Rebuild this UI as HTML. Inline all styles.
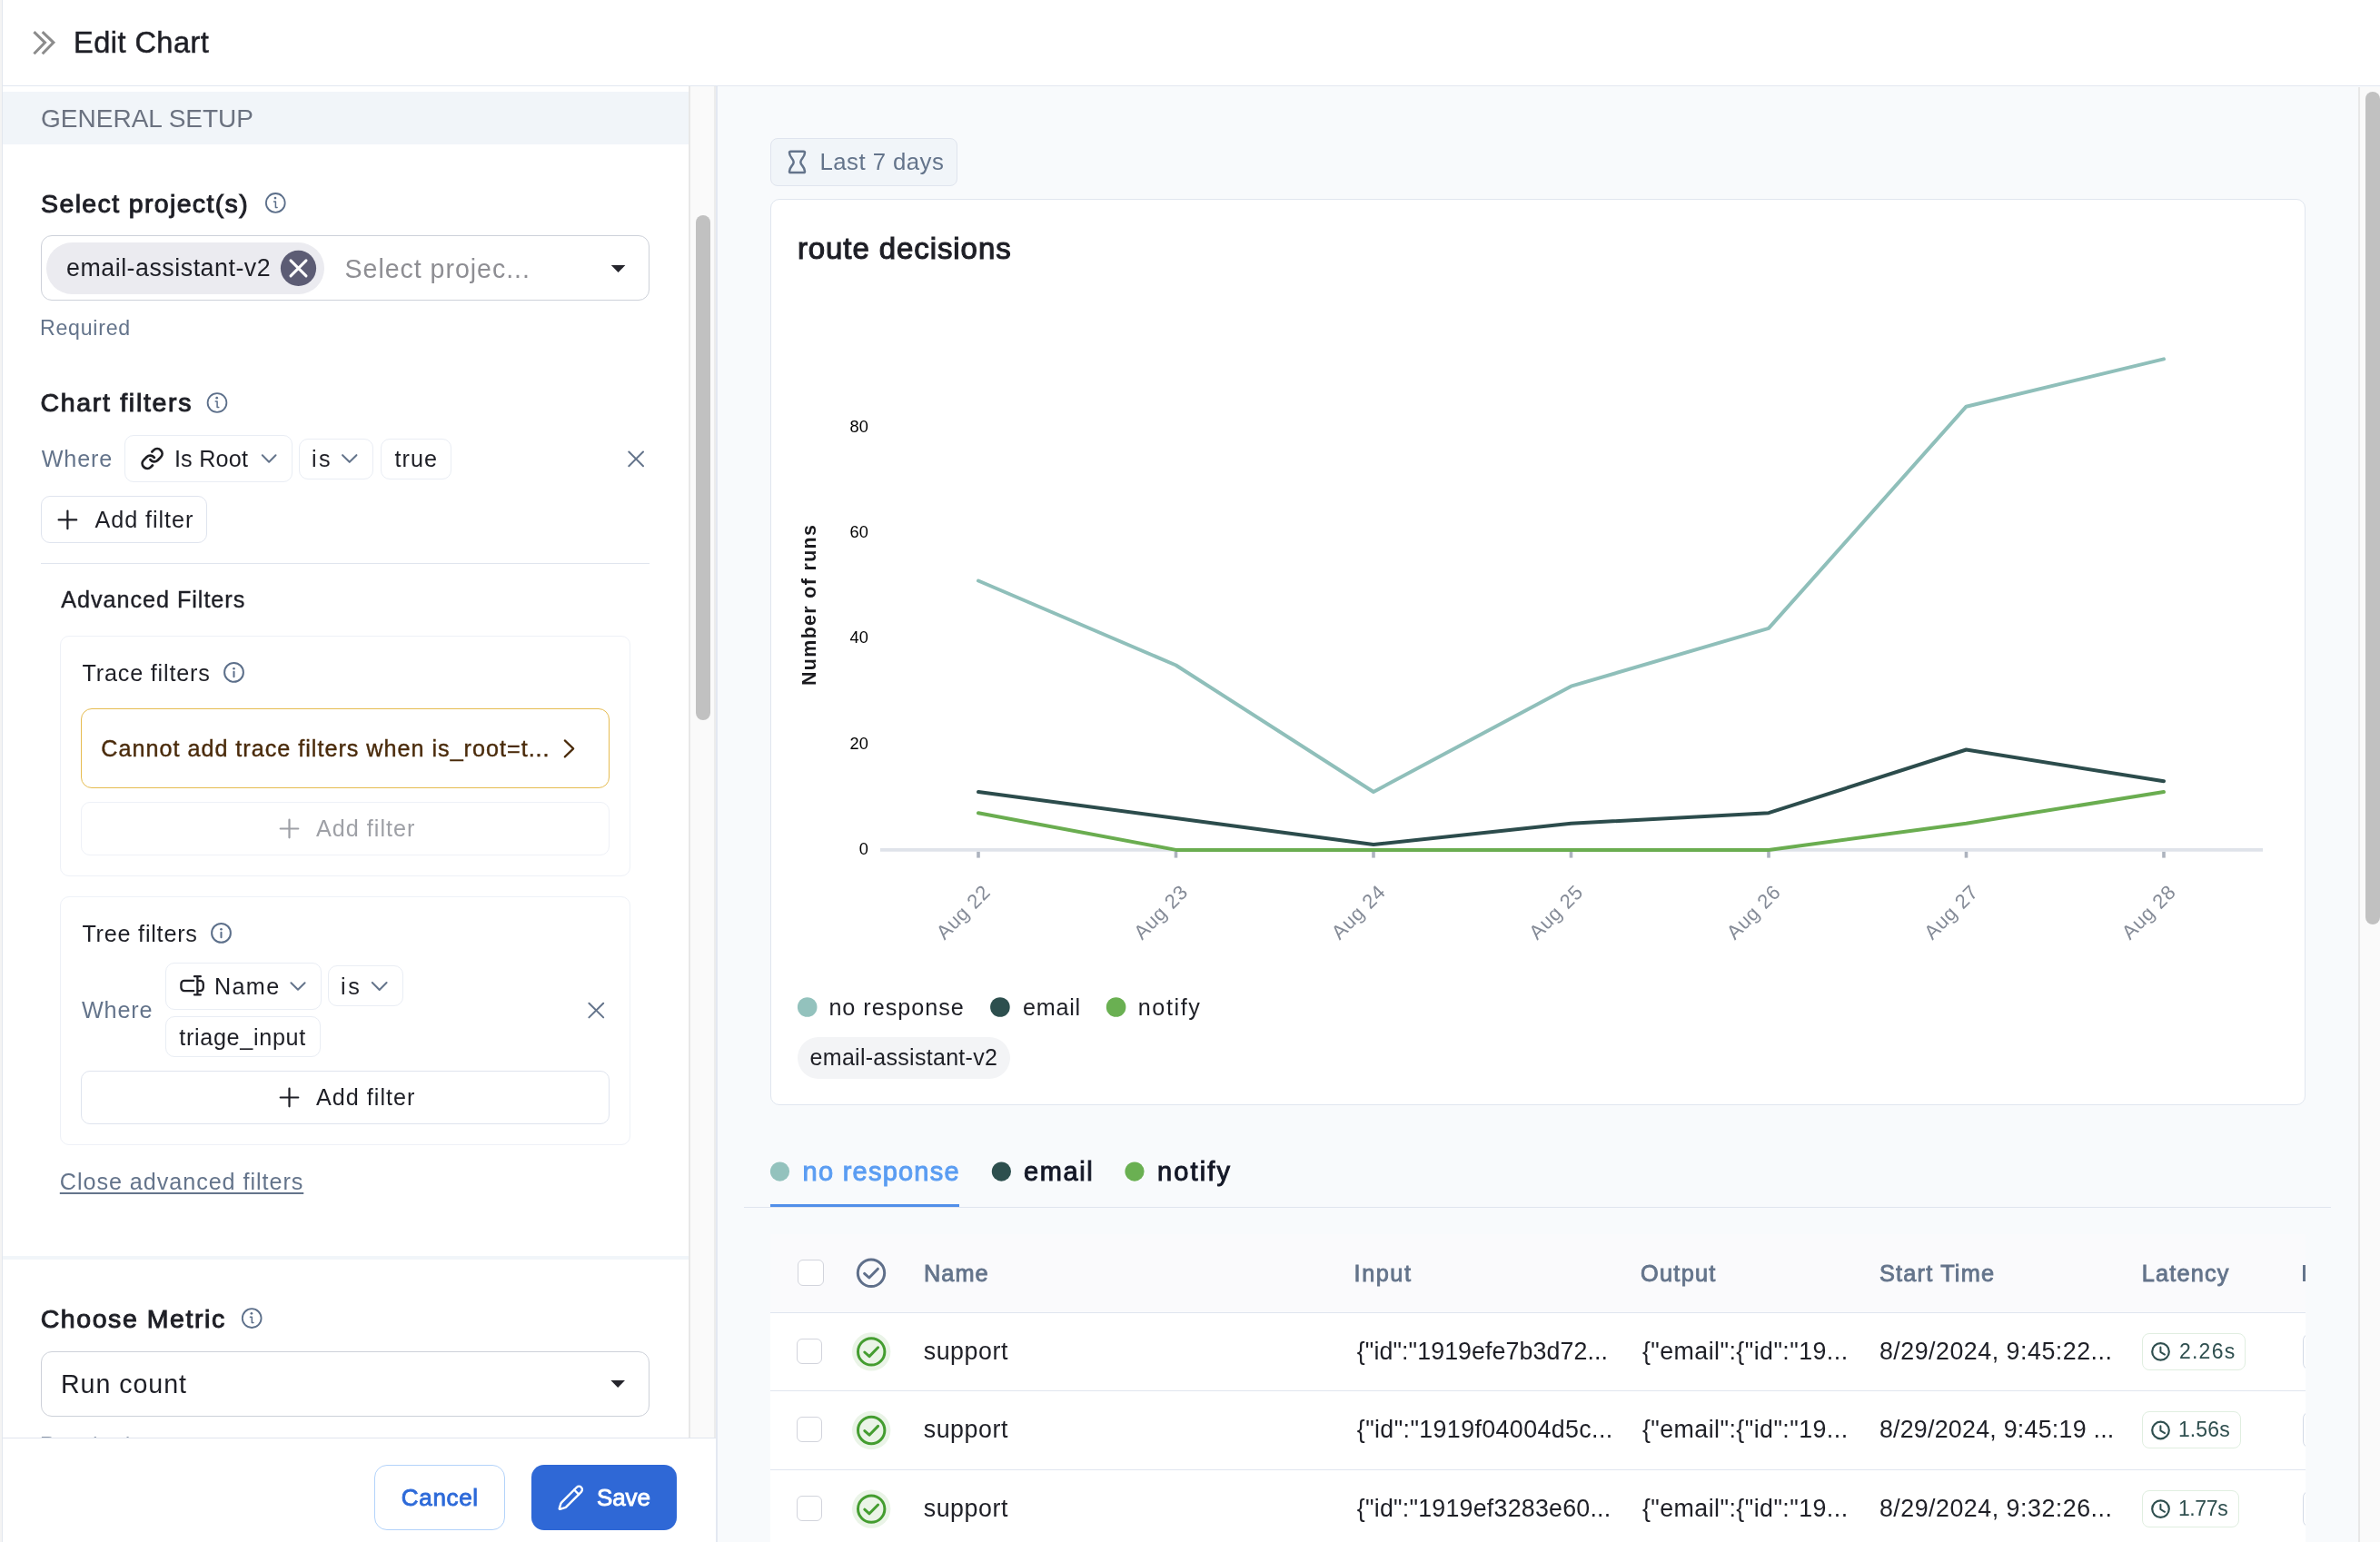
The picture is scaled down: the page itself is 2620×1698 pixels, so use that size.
<!DOCTYPE html>
<html lang="en">
<head>
<meta charset="utf-8">
<title>Edit Chart</title>
<style>
html,body{margin:0;padding:0;}
body{width:2620px;height:1698px;overflow:hidden;position:relative;background:#f8fafc;font-family:'Liberation Sans', sans-serif;}
.b{position:absolute;box-sizing:border-box;}
.t{position:absolute;white-space:pre;line-height:1;font-family:'Liberation Sans', sans-serif;}
svg.ov{position:absolute;left:0;top:0;will-change:transform;}
.tl{position:absolute;left:0;top:0;width:2620px;height:1698px;will-change:transform;}
.u{text-decoration:underline;text-decoration-thickness:2px;text-underline-offset:3px;}

</style>
</head>
<body>
<div class="b" style="left:0px;top:0px;width:2620px;height:94px;background:#fff;"></div>
<div class="b" style="left:3px;top:94px;width:2617px;height:1px;background:#e2e7f0;"></div>
<div class="b" style="left:0px;top:0px;width:2px;height:1698px;background:#f4f4f4;"></div>
<div class="b" style="left:2px;top:0px;width:1px;height:1698px;background:#e2e7ee;"></div>
<div class="b" style="left:3px;top:95px;width:755px;height:1488px;background:#fff;"></div>
<div class="b" style="left:3px;top:101px;width:755px;height:58px;background:#f1f5f9;"></div>
<div class="b" style="left:3px;top:1383px;width:755px;height:4px;background:#f1f5f9;"></div>
<div class="b" style="left:758px;top:95px;width:2px;height:1488px;background:#e8e8e8;"></div>
<div class="b" style="left:760px;top:95px;width:26px;height:1488px;background:#fafafa;"></div>
<div class="b" style="left:766px;top:237px;width:16px;height:556px;background:#c1c1c1;border-radius:8px;"></div>
<div class="b" style="left:786px;top:95px;width:2px;height:1488px;background:#ececec;"></div>
<div class="b" style="left:788px;top:95px;width:2px;height:1603px;background:#e3e8f1;"></div>
<div class="b" style="left:3px;top:1583px;width:785px;height:115px;background:#fff;"></div>
<div class="b" style="left:3px;top:1583px;width:785px;height:1px;background:#e0e5ee;"></div>
<div class="b" style="left:2596px;top:96px;width:2px;height:1602px;background:#e8e8e8;"></div>
<div class="b" style="left:2598px;top:96px;width:22px;height:1602px;background:#fafafa;"></div>
<div class="b" style="left:2604px;top:101px;width:16px;height:917px;background:#c1c1c1;border-radius:8px;"></div>
<div class="b" style="left:45px;top:259px;width:670px;height:72px;background:#fff;border:1px solid #cdd1d9;border-radius:12px;"></div>
<div class="b" style="left:51px;top:267px;width:306px;height:57px;background:#ebebf0;border-radius:29px;"></div>
<div class="b" style="left:137px;top:479px;width:185px;height:52px;background:#fff;border:1px solid #e9edf4;border-radius:10px;"></div>
<div class="b" style="left:329px;top:483px;width:82px;height:45px;background:#fff;border:1px solid #e9edf4;border-radius:10px;"></div>
<div class="b" style="left:419px;top:483px;width:78px;height:45px;background:#fff;border:1px solid #e9edf4;border-radius:10px;"></div>
<div class="b" style="left:45px;top:546px;width:183px;height:52px;background:#fff;border:1px solid #dfe4ee;border-radius:10px;"></div>
<div class="b" style="left:45px;top:620px;width:670px;height:1px;background:#e0e5ee;"></div>
<div class="b" style="left:66px;top:700px;width:628px;height:265px;background:#fff;border:1px solid #eef1f7;border-radius:10px;"></div>
<div class="b" style="left:89px;top:780px;width:582px;height:88px;background:#fff;border:1px solid #e6bc50;border-radius:12px;"></div>
<div class="b" style="left:89px;top:883px;width:582px;height:59px;background:#fff;border:1px solid #eef1f7;border-radius:10px;"></div>
<div class="b" style="left:66px;top:987px;width:628px;height:274px;background:#fff;border:1px solid #eef1f7;border-radius:10px;"></div>
<div class="b" style="left:182px;top:1060px;width:172px;height:52px;background:#fff;border:1px solid #e9edf4;border-radius:10px;"></div>
<div class="b" style="left:361px;top:1063px;width:83px;height:45px;background:#fff;border:1px solid #e9edf4;border-radius:10px;"></div>
<div class="b" style="left:182px;top:1119px;width:171px;height:45px;background:#fff;border:1px solid #e9edf4;border-radius:10px;"></div>
<div class="b" style="left:89px;top:1179px;width:582px;height:59px;background:#fff;border:1px solid #dfe4ee;border-radius:10px;"></div>
<div class="b" style="left:45px;top:1488px;width:670px;height:72px;background:#fff;border:1px solid #cdd1d9;border-radius:12px;"></div>
<div class="b" style="left:412px;top:1613px;width:144px;height:72px;background:#fff;border:1px solid #b3d3fa;border-radius:14px;"></div>
<div class="b" style="left:585px;top:1613px;width:160px;height:72px;background:#2f68d6;border-radius:14px;"></div>
<div class="b" style="left:848px;top:152px;width:206px;height:53px;background:#f1f5f9;border:1px solid #dfe4ee;border-radius:8px;"></div>
<div class="b" style="left:848px;top:219px;width:1690px;height:998px;background:#fff;border:1px solid #e0e6ef;border-radius:10px;"></div>
<div class="b" style="left:878px;top:1142px;width:234px;height:46px;background:#f3f4f6;border-radius:23px;"></div>
<div class="b" style="left:819px;top:1329px;width:1747px;height:1px;background:#e0e5ee;"></div>
<div class="b" style="left:848px;top:1326px;width:208px;height:3px;background:#518fe9;"></div>
<div class="b" style="left:848px;top:1359px;width:1690px;height:86px;background:#fafafc;"></div>
<div class="b" style="left:848px;top:1445px;width:1690px;height:253px;background:#fff;"></div>
<div class="b" style="left:848px;top:1445px;width:1690px;height:1px;background:#e0e5ef;"></div>
<div class="b" style="left:848px;top:1531px;width:1690px;height:1px;background:#e0e5ef;"></div>
<div class="b" style="left:848px;top:1618px;width:1690px;height:1px;background:#e0e5ef;"></div>
<div class="b" style="left:878px;top:1387px;width:29px;height:29px;background:#fff;border:1px solid #d2d4dc;border-radius:6px;"></div>
<div class="b" style="left:2535px;top:1393px;width:3px;height:18px;background:#64748b;"></div>
<div class="b" style="left:877px;top:1474px;width:28px;height:28px;background:#fff;border:1px solid #d2d4dc;border-radius:6px;"></div>
<div class="b" style="left:2358px;top:1468px;width:114px;height:41px;background:#fff;border:1px solid #e0eee0;border-radius:8px;"></div>
<div class="b" style="left:2535px;top:1468px;width:25px;height:41px;background:#fff;border:1px solid #d3dae6;border-radius:8px;clip-path:inset(0 22px 0 0);"></div>
<div class="b" style="left:877px;top:1560px;width:28px;height:28px;background:#fff;border:1px solid #d2d4dc;border-radius:6px;"></div>
<div class="b" style="left:2358px;top:1554px;width:109px;height:41px;background:#fff;border:1px solid #e0eee0;border-radius:8px;"></div>
<div class="b" style="left:2535px;top:1554px;width:25px;height:41px;background:#fff;border:1px solid #d3dae6;border-radius:8px;clip-path:inset(0 22px 0 0);"></div>
<div class="b" style="left:877px;top:1647px;width:28px;height:28px;background:#fff;border:1px solid #d2d4dc;border-radius:6px;"></div>
<div class="b" style="left:2358px;top:1641px;width:107px;height:41px;background:#fff;border:1px solid #e0eee0;border-radius:8px;"></div>
<div class="b" style="left:2535px;top:1641px;width:25px;height:41px;background:#fff;border:1px solid #d3dae6;border-radius:8px;clip-path:inset(0 22px 0 0);"></div>
<svg class="ov" width="2620" height="1698" viewBox="0 0 2620 1698" fill="none" stroke-linecap="round" stroke-linejoin="round">
<path d="M37.4 35.2 49.5 46.9 37.4 59.2M46.7 35.2 58.9 46.9 46.7 59.2" stroke="#8c8c8c" stroke-width="3" stroke-linecap="butt" stroke-linejoin="miter"/>
<circle cx="303.3" cy="223.4" r="10.4" stroke="#5c6f8a" stroke-width="1.8"/>
<path d="M301.5 222.0h1.9v6.4h1.7" stroke="#5c6f8a" stroke-width="1.5"/>
<circle cx="303.0" cy="218.1" r="1.35" fill="#5c6f8a"/>
<circle cx="328.5" cy="295.4" r="19.6" fill="#5c5c74"/>
<path d="M320 286.9l17 17M337 286.9l-17 17" stroke="#fff" stroke-width="3"/>
<path d="M672.8 291.9h15.6l-7.8 8z" fill="#25252c"/>
<circle cx="239" cy="443.5" r="10.4" stroke="#5c6f8a" stroke-width="1.8"/>
<path d="M237.2 442.1h1.9v6.4h1.7" stroke="#5c6f8a" stroke-width="1.5"/>
<circle cx="238.7" cy="438.2" r="1.35" fill="#5c6f8a"/>
<g transform="translate(154.4 491.8) scale(1.1)" stroke="#1f1f23" stroke-width="2.5"><path d="M10 13a5 5 0 0 0 7.54.54l3-3a5 5 0 0 0-7.07-7.07l-1.72 1.71"/><path d="M14 11a5 5 0 0 0-7.54-.54l-3 3a5 5 0 0 0 7.07 7.07l1.71-1.71"/></g>
<path d="M288.8 501.325l7.349999999999994 7.349999999999994 7.349999999999994 -7.349999999999994" stroke="#64748b" stroke-width="2"/>
<path d="M377.1 501.175l7.649999999999977 7.649999999999977 7.649999999999977 -7.649999999999977" stroke="#64748b" stroke-width="2"/>
<path d="M692.3 497.5L708 513.2M708 497.5L692.3 513.2" stroke="#64748b" stroke-width="2"/>
<path d="M64.60000000000001 572.4h19.6M74.4 562.6v19.6" stroke="#1e1f26" stroke-width="2.2"/>
<circle cx="257.5" cy="740.4" r="10.4" stroke="#5c6f8a" stroke-width="2"/>
<path d="M257.5 739.8v5.4" stroke="#5c6f8a" stroke-width="2"/>
<circle cx="257.5" cy="736.1999999999999" r="1.3" fill="#5c6f8a"/>
<path d="M621.8 815.4l9.4 9-9.4 9" stroke="#4a2b0b" stroke-width="2.2"/>
<path d="M308.7 912.5h19.6M318.5 902.7v19.6" stroke="#9ea0a6" stroke-width="2.2"/>
<circle cx="243.5" cy="1027.4" r="10.4" stroke="#5c6f8a" stroke-width="2"/>
<path d="M243.5 1026.8000000000002v5.4" stroke="#5c6f8a" stroke-width="2"/>
<circle cx="243.5" cy="1023.2" r="1.3" fill="#5c6f8a"/>
<g stroke="#1f1f26" stroke-width="2.3"><path d="M213.2 1079.8H203a3.6 3.6 0 0 0-3.6 3.6v4.2a3.6 3.6 0 0 0 3.6 3.6h10.2"/><path d="M218.6 1079.8h1.6a3.6 3.6 0 0 1 3.6 3.6v4.2a3.6 3.6 0 0 1-3.6 3.6h-1.6"/><path d="M217.4 1075.2v20.2M214 1075.2h6.8M214 1095.4h6.8"/></g>
<path d="M320.4 1082.2l7.600000000000023 7.600000000000023 7.600000000000023 -7.600000000000023" stroke="#64748b" stroke-width="2"/>
<path d="M409.8 1082.05l7.900000000000006 7.900000000000006 7.900000000000006 -7.900000000000006" stroke="#64748b" stroke-width="2"/>
<path d="M648.4 1104.8L664.2 1120.4M664.2 1104.8L648.4 1120.4" stroke="#64748b" stroke-width="2"/>
<path d="M308.7 1208.5h19.6M318.5 1198.7v19.6" stroke="#1e1f26" stroke-width="2.2"/>
<circle cx="277.2" cy="1451.6" r="10.4" stroke="#5c6f8a" stroke-width="1.8"/>
<path d="M275.4 1450.1999999999998h1.9v6.4h1.7" stroke="#5c6f8a" stroke-width="1.5"/>
<circle cx="276.9" cy="1446.3" r="1.35" fill="#5c6f8a"/>
<path d="M672.4 1520h15.6l-7.8 8z" fill="#25252c"/>
<g transform="translate(613.2 1634.2) scale(1.26)" stroke="#fff" stroke-width="1.9"><path d="M21.17 6.81a1 1 0 0 0-3.99-3.99L3.84 16.17a2 2 0 0 0-.5.83l-1.32 4.35a.5.5 0 0 0 .62.62l4.35-1.32a2 2 0 0 0 .83-.5z"/><path d="M15 5l4 4"/></g>
<path d="M870.4 166.7h14.2a1.4 1.4 0 0 1 1.4 1.4c0 5.2-4.7 6.6-4.7 10.3s4.7 5.1 4.7 10.3a1.4 1.4 0 0 1-1.4 1.4h-14.2a1.4 1.4 0 0 1-1.4-1.4c0-5.2 4.7-6.6 4.7-10.3s-4.7-5.1-4.7-10.3a1.4 1.4 0 0 1 1.4-1.4z" stroke="#64748b" stroke-width="2.5"/>
<path d="M969 935.9H2491" stroke="#dfe3ea" stroke-width="3.6" stroke-linecap="butt"/>
<path d="M1077.0 937.9V944.6" stroke="#adb3be" stroke-width="3.6" stroke-linecap="butt"/>
<path d="M1294.5 937.9V944.6" stroke="#adb3be" stroke-width="3.6" stroke-linecap="butt"/>
<path d="M1512.0 937.9V944.6" stroke="#adb3be" stroke-width="3.6" stroke-linecap="butt"/>
<path d="M1729.5 937.9V944.6" stroke="#adb3be" stroke-width="3.6" stroke-linecap="butt"/>
<path d="M1947.0 937.9V944.6" stroke="#adb3be" stroke-width="3.6" stroke-linecap="butt"/>
<path d="M2164.5 937.9V944.6" stroke="#adb3be" stroke-width="3.6" stroke-linecap="butt"/>
<path d="M2382.0 937.9V944.6" stroke="#adb3be" stroke-width="3.6" stroke-linecap="butt"/>
<polyline points="1077.0,639.5 1294.5,732.5 1512.0,872.0 1729.5,755.7 1947.0,691.8 2164.5,447.7 2382.0,395.4" stroke="#8fbfba" stroke-width="4"/>
<polyline points="1077.0,872.0 1294.5,901.0 1512.0,930.1 1729.5,906.8 1947.0,895.2 2164.5,825.5 2382.0,860.3" stroke="#2c4c4c" stroke-width="4"/>
<polyline points="1077.0,895.2 1294.5,935.9 1512.0,935.9 1729.5,935.9 1947.0,935.9 2164.5,906.8 2382.0,872.0" stroke="#6aad50" stroke-width="4"/>
<text x="955.8" y="940.7" text-anchor="end" font-family='"Liberation Sans", sans-serif' font-size="18.2" fill="#000" stroke="none">0</text>
<text x="955.8" y="824.5" text-anchor="end" font-family='"Liberation Sans", sans-serif' font-size="18.2" fill="#000" stroke="none">20</text>
<text x="955.8" y="708.2" text-anchor="end" font-family='"Liberation Sans", sans-serif' font-size="18.2" fill="#000" stroke="none">40</text>
<text x="955.8" y="592.0" text-anchor="end" font-family='"Liberation Sans", sans-serif' font-size="18.2" fill="#000" stroke="none">60</text>
<text x="955.8" y="475.7" text-anchor="end" font-family='"Liberation Sans", sans-serif' font-size="18.2" fill="#000" stroke="none">80</text>
<text x="898.4" y="666.5" text-anchor="middle" transform="rotate(-90 898.4 666.5)" textLength="177" lengthAdjust="spacing" font-family='"Liberation Sans", sans-serif' font-size="21.5" font-weight="700" fill="#1a1a1e" stroke="none">Number of runs</text>
<text x="1091.2" y="984.2" text-anchor="end" transform="rotate(-45 1091.2 984.2)" textLength="72.8" lengthAdjust="spacing" font-family='"Liberation Sans", sans-serif' font-size="22" fill="#858b97" stroke="none">Aug 22</text>
<text x="1308.7" y="984.2" text-anchor="end" transform="rotate(-45 1308.7 984.2)" textLength="72.8" lengthAdjust="spacing" font-family='"Liberation Sans", sans-serif' font-size="22" fill="#858b97" stroke="none">Aug 23</text>
<text x="1526.2" y="984.2" text-anchor="end" transform="rotate(-45 1526.2 984.2)" textLength="72.8" lengthAdjust="spacing" font-family='"Liberation Sans", sans-serif' font-size="22" fill="#858b97" stroke="none">Aug 24</text>
<text x="1743.7" y="984.2" text-anchor="end" transform="rotate(-45 1743.7 984.2)" textLength="72.8" lengthAdjust="spacing" font-family='"Liberation Sans", sans-serif' font-size="22" fill="#858b97" stroke="none">Aug 25</text>
<text x="1961.2" y="984.2" text-anchor="end" transform="rotate(-45 1961.2 984.2)" textLength="72.8" lengthAdjust="spacing" font-family='"Liberation Sans", sans-serif' font-size="22" fill="#858b97" stroke="none">Aug 26</text>
<text x="2178.7" y="984.2" text-anchor="end" transform="rotate(-45 2178.7 984.2)" textLength="72.8" lengthAdjust="spacing" font-family='"Liberation Sans", sans-serif' font-size="22" fill="#858b97" stroke="none">Aug 27</text>
<text x="2396.2" y="984.2" text-anchor="end" transform="rotate(-45 2396.2 984.2)" textLength="72.8" lengthAdjust="spacing" font-family='"Liberation Sans", sans-serif' font-size="22" fill="#858b97" stroke="none">Aug 28</text>
<circle cx="888.7" cy="1109" r="10.8" fill="#93c2bd"/>
<circle cx="1100.9" cy="1109" r="10.8" fill="#2d4f4e"/>
<circle cx="1228.6" cy="1109" r="10.8" fill="#6ab052"/>
<circle cx="858.5" cy="1290.1" r="10.6" fill="#93c2bd"/>
<circle cx="1102.4" cy="1290.1" r="10.6" fill="#2d4f4e"/>
<circle cx="1249" cy="1290.1" r="10.6" fill="#6ab052"/>
<circle cx="959" cy="1401.8" r="14.7" stroke="#5f6f8a" stroke-width="3"/><path d="M951.6 1402.4l5.2 4.6 9.6-9.8" stroke="#5f6f8a" stroke-width="3"/>
<circle cx="959.2" cy="1488.4" r="21.2" fill="#eaf4e7"/><circle cx="959.2" cy="1488.4" r="14.7" stroke="#449d30" stroke-width="3"/><path d="M951.8 1489.0l5.2 4.6 9.6-9.8" stroke="#449d30" stroke-width="3"/>
<circle cx="2378.5" cy="1488.4" r="9.3" stroke="#2f4f4f" stroke-width="2.2"/><path d="M2378.4 1483.6000000000001v5.2l4.6 2.8" stroke="#2f4f4f" stroke-width="2"/>
<circle cx="959.2" cy="1575.0" r="21.2" fill="#eaf4e7"/><circle cx="959.2" cy="1575.0" r="14.7" stroke="#449d30" stroke-width="3"/><path d="M951.8 1575.6l5.2 4.6 9.6-9.8" stroke="#449d30" stroke-width="3"/>
<circle cx="2378.5" cy="1575.0" r="9.3" stroke="#2f4f4f" stroke-width="2.2"/><path d="M2378.4 1570.2v5.2l4.6 2.8" stroke="#2f4f4f" stroke-width="2"/>
<circle cx="959.2" cy="1661.6" r="21.2" fill="#eaf4e7"/><circle cx="959.2" cy="1661.6" r="14.7" stroke="#449d30" stroke-width="3"/><path d="M951.8 1662.1999999999998l5.2 4.6 9.6-9.8" stroke="#449d30" stroke-width="3"/>
<circle cx="2378.5" cy="1661.6" r="9.3" stroke="#2f4f4f" stroke-width="2.2"/><path d="M2378.4 1656.8v5.2l4.6 2.8" stroke="#2f4f4f" stroke-width="2"/>
</svg>
<div class="tl">
<span class="t" style="left:81.00px;top:30.89px;font-size:32.5px;color:#1e1f26;letter-spacing:0.478px;-webkit-text-stroke:0.52px #1e1f26;">Edit Chart</span>
<span class="t" style="left:45.10px;top:116.70px;font-size:28px;color:#6b7280;letter-spacing:0.000px;">GENERAL SETUP</span>
<span class="t" style="left:45.10px;top:209.97px;font-size:28.5px;color:#1e1f26;letter-spacing:1.356px;-webkit-text-stroke:0.97px #1e1f26;">Select project(s)</span>
<span class="t" style="left:73.00px;top:281.61px;font-size:26.8px;color:#1e1f26;letter-spacing:0.512px;">email-assistant-v2</span>
<span class="t" style="left:379.50px;top:281.79px;font-size:28.6px;color:#8e8e93;letter-spacing:0.953px;">Select projec...</span>
<span class="t" style="left:44.00px;top:350.36px;font-size:23.2px;color:#64748b;letter-spacing:0.729px;">Required</span>
<span class="t" style="left:44.50px;top:429.37px;font-size:28.5px;color:#1e1f26;letter-spacing:1.692px;-webkit-text-stroke:0.97px #1e1f26;">Chart filters</span>
<span class="t" style="left:45.80px;top:493.17px;font-size:25.2px;color:#64748b;letter-spacing:0.800px;">Where</span>
<span class="t" style="left:191.90px;top:493.17px;font-size:25.2px;color:#1e1f26;letter-spacing:0.233px;">Is Root</span>
<span class="t" style="left:343.10px;top:493.17px;font-size:25.2px;color:#1e1f26;letter-spacing:2.300px;">is</span>
<span class="t" style="left:434.40px;top:493.17px;font-size:25.2px;color:#1e1f26;letter-spacing:1.067px;">true</span>
<span class="t" style="left:104.60px;top:559.87px;font-size:25.2px;color:#1e1f26;letter-spacing:0.922px;">Add filter</span>
<span class="t" style="left:67.20px;top:648.47px;font-size:25.2px;color:#1e1f26;letter-spacing:0.967px;-webkit-text-stroke:0.4px #1e1f26;">Advanced Filters</span>
<span class="t" style="left:90.40px;top:729.17px;font-size:25.2px;color:#1e1f26;letter-spacing:0.825px;">Trace filters</span>
<span class="t" style="left:111.30px;top:811.67px;font-size:25.2px;color:#4a2b0b;letter-spacing:0.985px;-webkit-text-stroke:0.4px #4a2b0b;">Cannot add trace filters when is_root=t...</span>
<span class="t" style="left:348.00px;top:900.17px;font-size:25.2px;color:#9ea0a6;letter-spacing:1.000px;">Add filter</span>
<span class="t" style="left:90.40px;top:1015.57px;font-size:25.2px;color:#1e1f26;letter-spacing:0.773px;">Tree filters</span>
<span class="t" style="left:90.00px;top:1099.97px;font-size:25.2px;color:#64748b;letter-spacing:0.825px;">Where</span>
<span class="t" style="left:236.00px;top:1074.17px;font-size:25.2px;color:#1e1f26;letter-spacing:1.333px;">Name</span>
<span class="t" style="left:375.00px;top:1074.17px;font-size:25.2px;color:#1e1f26;letter-spacing:2.600px;">is</span>
<span class="t" style="left:197.30px;top:1129.77px;font-size:25.2px;color:#1e1f26;letter-spacing:0.664px;">triage_input</span>
<span class="t" style="left:348.00px;top:1196.17px;font-size:25.2px;color:#1e1f26;letter-spacing:1.000px;">Add filter</span>
<span class="t u" style="left:65.80px;top:1288.97px;font-size:25.2px;color:#64748b;letter-spacing:0.938px;">Close advanced filters</span>
<span class="t" style="left:44.70px;top:1438.37px;font-size:28.5px;color:#1e1f26;letter-spacing:1.567px;-webkit-text-stroke:0.97px #1e1f26;">Choose Metric</span>
<span class="t" style="left:67.00px;top:1510.29px;font-size:28.6px;color:#1e1f26;letter-spacing:0.950px;">Run count</span>
<span class="t" style="left:44.00px;top:1579.76px;font-size:23.2px;color:#64748b;letter-spacing:0.729px;clip-path:inset(0 0 20.3px 0);">Required</span>
<span class="t" style="left:441.80px;top:1636.49px;font-size:26px;color:#2d6ad9;letter-spacing:0.680px;-webkit-text-stroke:0.88px #2d6ad9;">Cancel</span>
<span class="t" style="left:656.90px;top:1636.49px;font-size:26px;color:#fff;letter-spacing:-0.067px;-webkit-text-stroke:0.88px #fff;">Save</span>
<span class="t" style="left:902.50px;top:165.86px;font-size:25.8px;color:#64748b;letter-spacing:0.440px;">Last 7 days</span>
<span class="t" style="left:877.90px;top:257.17px;font-size:33px;color:#1e1f26;letter-spacing:0.914px;-webkit-text-stroke:1.12px #1e1f26;">route decisions</span>
<span class="t" style="left:912.40px;top:1096.77px;font-size:25.2px;color:#1e1f26;letter-spacing:0.970px;">no response</span>
<span class="t" style="left:1126.00px;top:1096.77px;font-size:25.2px;color:#1e1f26;letter-spacing:0.725px;">email</span>
<span class="t" style="left:1252.80px;top:1096.77px;font-size:25.2px;color:#1e1f26;letter-spacing:1.560px;">notify</span>
<span class="t" style="left:891.60px;top:1152.14px;font-size:25px;color:#1e1f26;letter-spacing:0.282px;">email-assistant-v2</span>
<span class="t" style="left:883.60px;top:1275.55px;font-size:29px;color:#5b9df2;letter-spacing:1.240px;-webkit-text-stroke:0.99px #5b9df2;">no response</span>
<span class="t" style="left:1127.00px;top:1275.55px;font-size:29px;color:#141827;letter-spacing:1.625px;-webkit-text-stroke:0.99px #141827;">email</span>
<span class="t" style="left:1274.00px;top:1275.55px;font-size:29px;color:#141827;letter-spacing:2.120px;-webkit-text-stroke:0.99px #141827;">notify</span>
<span class="t" style="left:1016.90px;top:1389.98px;font-size:25.3px;color:#64748b;letter-spacing:1.100px;-webkit-text-stroke:0.86px #64748b;">Name</span>
<span class="t" style="left:1490.60px;top:1389.98px;font-size:25.3px;color:#64748b;letter-spacing:1.525px;-webkit-text-stroke:0.86px #64748b;">Input</span>
<span class="t" style="left:1806.10px;top:1389.98px;font-size:25.3px;color:#64748b;letter-spacing:1.260px;-webkit-text-stroke:0.86px #64748b;">Output</span>
<span class="t" style="left:2068.90px;top:1389.98px;font-size:25.3px;color:#64748b;letter-spacing:1.211px;-webkit-text-stroke:0.86px #64748b;">Start Time</span>
<span class="t" style="left:2357.70px;top:1389.98px;font-size:25.3px;color:#64748b;letter-spacing:1.183px;-webkit-text-stroke:0.86px #64748b;">Latency</span>
<span class="t" style="left:1016.70px;top:1474.81px;font-size:26.8px;color:#1e1f26;letter-spacing:0.567px;">support</span>
<span class="t" style="left:1493.80px;top:1474.81px;font-size:26.8px;color:#1e1f26;letter-spacing:0.082px;">{&quot;id&quot;:&quot;1919efe7b3d72...</span>
<span class="t" style="left:1807.90px;top:1474.81px;font-size:26.8px;color:#1e1f26;letter-spacing:0.440px;">{&quot;email&quot;:{&quot;id&quot;:&quot;19...</span>
<span class="t" style="left:2068.90px;top:1474.81px;font-size:26.8px;color:#1e1f26;letter-spacing:0.510px;">8/29/2024, 9:45:22...</span>
<span class="t" style="left:2398.90px;top:1476.83px;font-size:23px;color:#2f4f4f;letter-spacing:1.275px;">2.26s</span>
<span class="t" style="left:1016.70px;top:1561.41px;font-size:26.8px;color:#1e1f26;letter-spacing:0.567px;">support</span>
<span class="t" style="left:1493.80px;top:1561.41px;font-size:26.8px;color:#1e1f26;letter-spacing:0.386px;">{&quot;id&quot;:&quot;1919f04004d5c...</span>
<span class="t" style="left:1807.90px;top:1561.41px;font-size:26.8px;color:#1e1f26;letter-spacing:0.440px;">{&quot;email&quot;:{&quot;id&quot;:&quot;19...</span>
<span class="t" style="left:2068.90px;top:1561.41px;font-size:26.8px;color:#1e1f26;letter-spacing:0.243px;">8/29/2024, 9:45:19 ...</span>
<span class="t" style="left:2397.90px;top:1563.43px;font-size:23px;color:#2f4f4f;letter-spacing:0.150px;">1.56s</span>
<span class="t" style="left:1016.70px;top:1648.01px;font-size:26.8px;color:#1e1f26;letter-spacing:0.567px;">support</span>
<span class="t" style="left:1493.80px;top:1648.01px;font-size:26.8px;color:#1e1f26;letter-spacing:0.227px;">{&quot;id&quot;:&quot;1919ef3283e60...</span>
<span class="t" style="left:1807.90px;top:1648.01px;font-size:26.8px;color:#1e1f26;letter-spacing:0.440px;">{&quot;email&quot;:{&quot;id&quot;:&quot;19...</span>
<span class="t" style="left:2068.90px;top:1648.01px;font-size:26.8px;color:#1e1f26;letter-spacing:0.510px;">8/29/2024, 9:32:26...</span>
<span class="t" style="left:2397.90px;top:1650.03px;font-size:23px;color:#2f4f4f;letter-spacing:-0.350px;">1.77s</span>
</div>

</body>
</html>
